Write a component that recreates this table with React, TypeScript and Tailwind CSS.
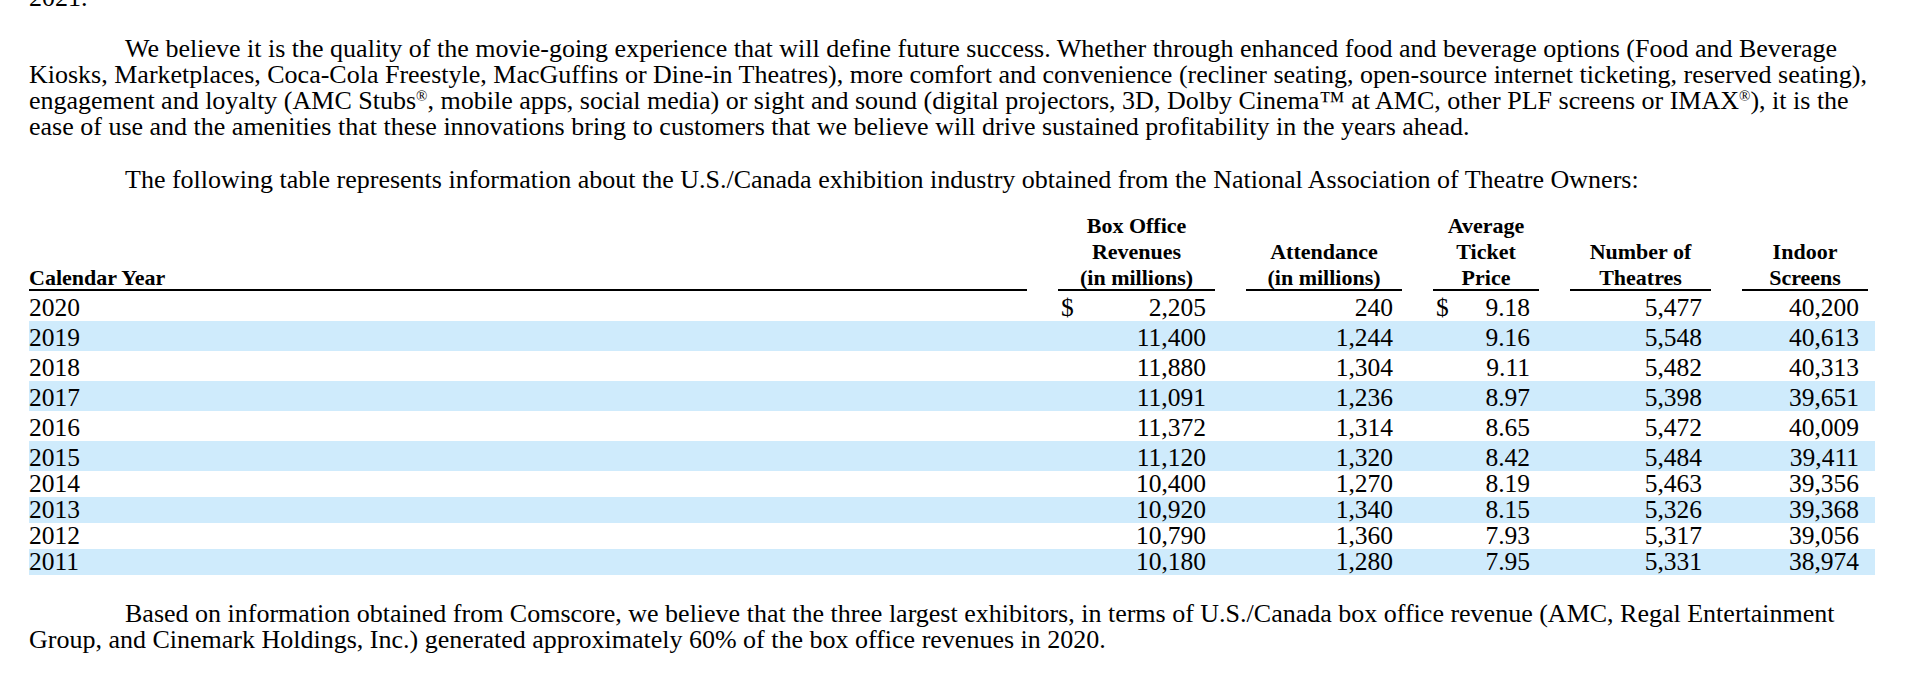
import React from 'react';

type Row = {
  year: string;
  box: string;
  att: string;
  price: string;
  theatres: string;
  screens: string;
};

const rows: Row[] = [
  { year: '2020', box: '2,205', att: '240', price: '9.18', theatres: '5,477', screens: '40,200' },
  { year: '2019', box: '11,400', att: '1,244', price: '9.16', theatres: '5,548', screens: '40,613' },
  { year: '2018', box: '11,880', att: '1,304', price: '9.11', theatres: '5,482', screens: '40,313' },
  { year: '2017', box: '11,091', att: '1,236', price: '8.97', theatres: '5,398', screens: '39,651' },
  { year: '2016', box: '11,372', att: '1,314', price: '8.65', theatres: '5,472', screens: '40,009' },
  { year: '2015', box: '11,120', att: '1,320', price: '8.42', theatres: '5,484', screens: '39,411' },
  { year: '2014', box: '10,400', att: '1,270', price: '8.19', theatres: '5,463', screens: '39,356' },
  { year: '2013', box: '10,920', att: '1,340', price: '8.15', theatres: '5,326', screens: '39,368' },
  { year: '2012', box: '10,790', att: '1,360', price: '7.93', theatres: '5,317', screens: '39,056' },
  { year: '2011', box: '10,180', att: '1,280', price: '7.95', theatres: '5,331', screens: '38,974' },
];

const gridCols = 'grid grid-cols-[998px_157px_156px_106px_141px_126px] gap-x-[31px]';

const HeadCell = ({ lines }: { lines: string[] }) => (
  <div className="self-end text-center border-b-2 border-black">
    <div className="-mb-[2px]">
      {lines.map((l) => (
        <div key={l}>{l}</div>
      ))}
    </div>
  </div>
);

const NumCell = ({ value, dollar }: { value: string; dollar?: boolean }) => (
  <div className="flex justify-between pr-[9px]">
    <span className="pl-[3px]">{dollar ? '$' : ''}</span>
    <span>{value}</span>
  </div>
);

// registered mark, small and raised like the filing
const Reg = () => <sup className="text-[15px] -top-[8px]">®</sup>;

export default function App() {
  return (
    <div className="w-[1907px] h-[678px] overflow-hidden bg-white text-black font-['Liberation_Serif','Times_New_Roman',serif] text-[26px] leading-[26px]">
      <div className="pl-[29px] w-[1875px]">
        <p className="-mt-[15px]">2021.</p>

        <p className="mt-[25px] indent-[96px]">
          We believe it is the quality of the movie-going experience that will define future success. Whether through
          enhanced food and beverage options (Food and Beverage Kiosks, Marketplaces, Coca-Cola Freestyle, MacGuffins or
          Dine-in Theatres), more comfort and convenience (recliner seating, open-source internet ticketing, reserved
          seating), engagement and loyalty (AMC Stubs<Reg />, mobile apps, social media) or sight and sound (digital
          projectors, 3D, Dolby Cinema™ at AMC, other PLF screens or IMAX<Reg />), it is the ease of use and the
          amenities that these innovations bring to customers that we believe will drive sustained profitability in the
          years ahead.
        </p>

        <p className="mt-[27px] indent-[96px]">
          The following table represents information about the U.S./Canada exhibition industry obtained from the National
          Association of Theatre Owners:
        </p>

        <div className="mt-[20px] w-[1846px]">
          {/* header */}
          <div className={`${gridCols} font-bold text-[22px] leading-[26px]`}>
            <div className="self-end border-b-2 border-black">
              <div className="-mb-[2px]">Calendar Year</div>
            </div>
            <HeadCell lines={['Box Office', 'Revenues', '(in millions)']} />
            <HeadCell lines={['Attendance', '(in millions)']} />
            <HeadCell lines={['Average', 'Ticket', 'Price']} />
            <HeadCell lines={['Number of', 'Theatres']} />
            <HeadCell lines={['Indoor', 'Screens']} />
          </div>

          {rows.map((r, i) => (
            <div
              key={r.year}
              className={`${gridCols} text-[25.5px] ${i % 2 === 1 ? 'bg-[#cfebfc]' : ''} ${i < 6 ? 'h-[30px] pt-[4px]' : 'h-[26px]'}`}
            >
              <div>{r.year}</div>
              <NumCell value={r.box} dollar={i === 0} />
              <NumCell value={r.att} />
              <NumCell value={r.price} dollar={i === 0} />
              <NumCell value={r.theatres} />
              <NumCell value={r.screens} />
            </div>
          ))}
        </div>

        <p className="mt-[26px] indent-[96px]">
          Based on information obtained from Comscore, we believe that the three largest exhibitors, in terms of
          U.S./Canada box office revenue (AMC, Regal Entertainment Group, and Cinemark Holdings, Inc.) generated
          approximately 60% of the box office revenues in 2020.
        </p>
      </div>
    </div>
  );
}
